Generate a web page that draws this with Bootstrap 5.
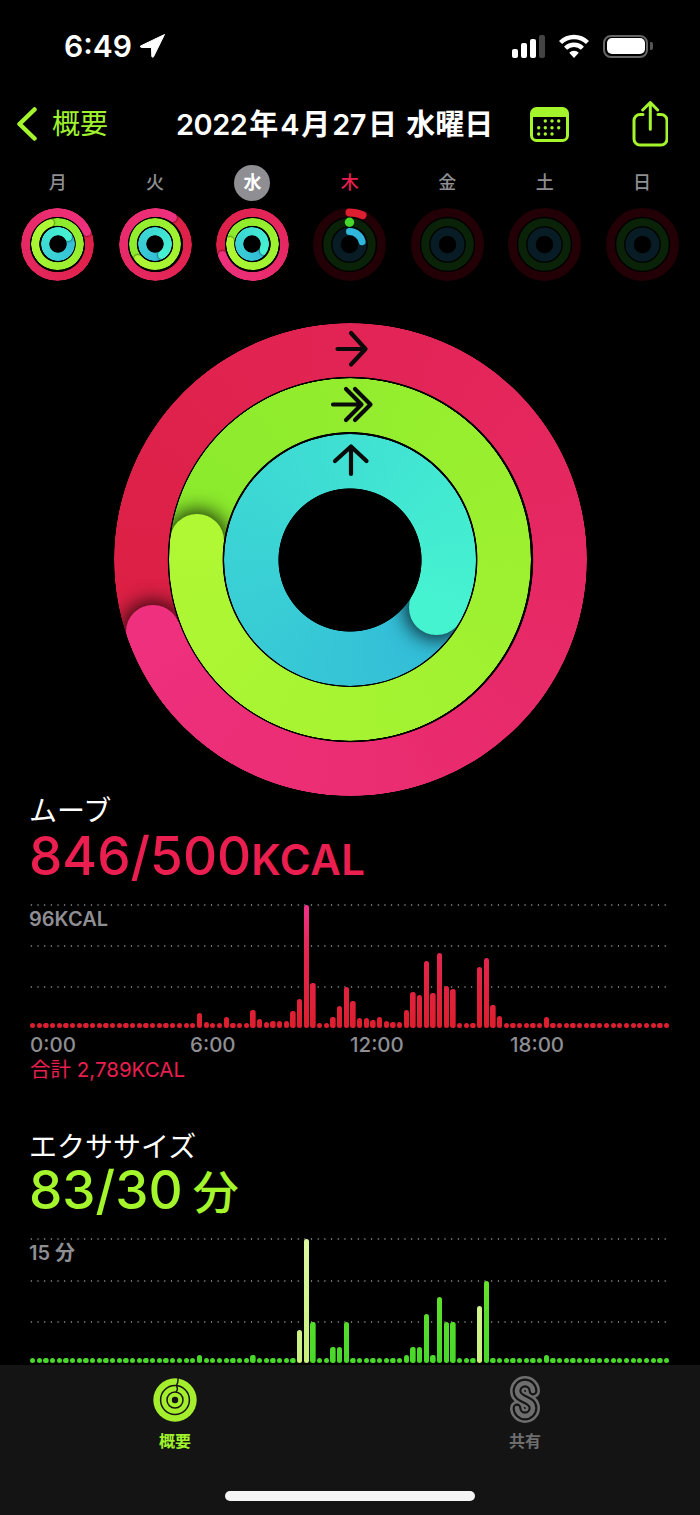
<!DOCTYPE html>
<html lang="ja">

<head>
    <meta charset="UTF-8">
    <title>アクティビティ</title>
    <link rel="stylesheet" href="https://cdn.jsdelivr.net/npm/bootstrap@5.3.0/dist/css/bootstrap.min.css">
    <style>
        html, body { background: #000; margin: 0; }
        body { font-family: Inter, "Noto Sans CJK JP", sans-serif; color: #fff; }
        #phone { width: 700px; height: 1515px; }
        .scroll-pane { min-height: 0; }

        /* status bar */
        .status-row { height: 92px; padding: 0 47px 0 64px; }
        .status-time { font-size: 30px; font-weight: 600; line-height: 1; }
        .signal-group { display: flex; align-items: flex-end; gap: 3px; height: 23px; margin-right: 14px; }
        .signal-bar { width: 6px; background: #fff; border-radius: 2px; }
        .signal-off { background: #444; }
        .wifi-icon { margin-right: 14px; }
        .batt-box { width: 45px; height: 23px; border: 2px solid #666; border-radius: 8px; padding: 1.5px; }
        .batt-fill { background: #fff; border-radius: 5px; height: 100%; }
        .batt-nub { width: 3px; height: 8px; background: #555; border-radius: 0 2px 2px 0; margin-left: 2px; }

        /* nav */
        .nav-row { height: 64px; padding-left: 17px; }
        .nav-back { width: 159px; color: #a0f22c; font-size: 28px; }
        .nav-back span { margin-left: 15px; line-height: 1; }
        .nav-title { width: 354px; font-size: 29px; font-weight: 600; line-height: 1; white-space: nowrap; }
        .nav-title i { font-style: normal; letter-spacing: -0.5px; }
        .nav-title b { font-weight: 600; margin: 0 2px; }
        .nav-cal { width: 102px; }

        /* week */
        .week-grid { display: grid; grid-template-columns: repeat(7, 97.4px); padding-left: 9px; }
        .day-cell { display: flex; flex-direction: column; align-items: center; }
        .day-name { width: 36px; height: 36px; margin-top: 9px; border-radius: 50%; font-size: 18px; font-weight: 500; line-height: 36px; text-align: center; color: #8e8e93; }
        .day-today { background: #8e8e93; color: #fff; font-weight: 700; }
        .day-thu { color: #ea1f4f; }
        .day-ring { margin-top: 6.7px; height: 73px; }

        /* rings */
        .ring-stack { position: relative; }
        .ring-layer { position: absolute; border-radius: 50%; overflow: hidden; }
        .ring-fill { position: absolute; inset: 0; }
        .ring-cap { position: absolute; border-radius: 50%; }
        .main-ring { width: 473px; height: 473px; margin: 42.5px auto 0; }
        .ring-arrows { position: absolute; inset: 0; }

        /* charts */
        .sect-label { padding-left: 29px; font-size: 28px; line-height: 34px; }
        .sect-big { padding-left: 29px; font-size: 53px; font-weight: 500; line-height: 50px; margin-top: 3px; white-space: nowrap; }
        .sect-big small { font-size: 42px; font-weight: 600; letter-spacing: .5px; }
        .sect-big span { font-size: 46px; font-weight: 500; margin-left: 10px; }
        .tone-red { color: #ea1f4f; }
        .tone-green { color: #a4f52c; margin-top: 1px; }
        .chart-box { position: relative; margin: 20px 30px 0 28px; }
        #chart-exercise { margin-top: 22px; }
        .grid-line { position: absolute; left: 0; right: 0; height: 2px; background: radial-gradient(circle, #777 .8px, transparent 1.1px) 0 0 / 6.68px 2px repeat-x; }
        .chart-max { position: absolute; left: 1px; top: 2px; font-size: 20px; font-weight: 600; line-height: 24px; color: #8e8e93; }
        .bars { position: absolute; left: 2.05px; right: 0; bottom: 0; display: flex; align-items: flex-end; gap: 1.377px; }
        .bar { width: 5.3px; flex: none; border-radius: 2.65px; background-position: bottom; background-size: 100% 124px; }
        .bars-red .bar { background-image: linear-gradient(to top, #dd1e2e, #e5264e 60%, #f0328a); }
        .bars-green .bar { background-image: linear-gradient(to top, #47d82a, #62e02c 60%, #96f034); }
        .bars-green .bar.bar-lit { background-image: linear-gradient(to top, #c8f07a, #dcf8a0); }
        .axis-row { display: grid; grid-template-columns: repeat(4, 160px); padding-left: 30px; margin-top: 5px; font-size: 20.5px; font-weight: 500; line-height: 24px; color: #8e8e93; }
        .chart-total { padding-left: 30px; font-size: 20.5px; line-height: 26px; color: #ea1f4f; }

        /* tab bar */
        .tab-bar { height: 150px; flex: none; padding-top: 11px; background: #141414; }
        .tab-icon { height: 47px; }
        .tab-text { font-size: 16px; font-weight: 700; line-height: 20px; margin-top: 8px; }
        .tab-on { color: #a0f22c; }
        .tab-off { color: #6e6e6e; }
        .home-bar { width: 250px; height: 10px; margin-top: 40px; background: #f5f5f5; }
    </style>
</head>

<body>
    <div id="phone" class="d-flex flex-column overflow-hidden">
        <div class="scroll-pane flex-grow-1 overflow-hidden">

            <!-- status bar -->
            <div class="status-row d-flex align-items-center justify-content-between">
                <div class="d-flex align-items-center">
                    <span class="status-time">6:49</span>
                    <svg class="ms-2" width="25" height="24" viewBox="0 0 25 24"><path d="M24.5 0.5 L0.5 12 Q0 13.2 1.5 13.5 L11.5 13.5 L11.8 22.5 Q12.5 24 13.5 22.8 Z" fill="#fff" stroke="#fff" stroke-linejoin="round"/></svg>
                </div>
                <div class="d-flex align-items-center">
                    <div class="signal-group">
                        <div class="signal-bar" style="height:9px"></div>
                        <div class="signal-bar" style="height:15px"></div>
                        <div class="signal-bar" style="height:19px"></div>
                        <div class="signal-bar signal-off" style="height:23px"></div>
                    </div>
                    <svg class="wifi-icon" width="30" height="24" viewBox="0 0 30 24" fill="none" stroke="#fff" stroke-width="4.4">
                        <path d="M1.5 8.5 A19.5 19.5 0 0 1 28.5 8.5"/>
                        <path d="M6.6 14.2 A12 12 0 0 1 23.4 14.2"/>
                        <path d="M15 24 L10.2 18.8 A6.8 6.8 0 0 1 19.8 18.8 Z" fill="#fff" stroke="none"/>
                    </svg>
                    <div class="batt-box"><div class="batt-fill"></div></div>
                    <div class="batt-nub"></div>
                </div>
            </div>

            <!-- nav -->
            <div class="nav-row d-flex align-items-center">
                <div class="nav-back d-flex align-items-center">
                    <svg width="20" height="34" viewBox="0 0 20 34" fill="none" stroke="#a4f52c" stroke-width="4.5" stroke-linecap="round" stroke-linejoin="round"><path d="M17.5 2.5 L2.5 17 L17.5 31.5"/></svg>
                    <span>概要</span>
                </div>
                <div class="nav-title"><i>2022</i><b>年</b><i>4</i><b>月</b><i>27</i><b>日</b> 水曜日</div>
                <div class="nav-cal d-flex">
                    <svg width="39" height="35" viewBox="0 0 39 35">
                        <rect x="1.5" y="1.5" width="36" height="32" rx="5" fill="none" stroke="#a4f52c" stroke-width="3"/>
                        <path d="M1.5 10 V6 a5 5 0 0 1 5 -5 H32.5 a5 5 0 0 1 5 5 V10 Z" fill="#a4f52c"/>
                        <g id="cal-dots" fill="#a4f52c"></g>
                    </svg>
                </div>
                <svg width="36" height="46" viewBox="0 0 36 46" fill="none" stroke="#a4f52c" stroke-width="3" stroke-linecap="round" stroke-linejoin="round">
                    <path d="M11 13.5 H8 a6 6 0 0 0 -6 6 V38 a6 6 0 0 0 6 6 H29 a6 6 0 0 0 6 -6 V19.5 a6 6 0 0 0 -6 -6 H26"/>
                    <path d="M18.3 28.3 V2 M10.7 9 L18.3 1.5 L25.7 9"/>
                </svg>
            </div>

            <!-- week -->
            <div id="week" class="week-grid"></div>

            <!-- main ring -->
            <div id="main-ring" class="ring-stack main-ring"></div>

            <!-- move -->
            <div class="sect-label" style="margin-top:-2px">ムーブ</div>
            <div class="sect-big tone-red">846/500<small>KCAL</small></div>
            <div id="chart-move" class="chart-box"></div>
            <div class="axis-row"><span>0:00</span><span>6:00</span><span>12:00</span><span>18:00</span></div>
            <div class="chart-total">合計 2,789KCAL</div>

            <!-- exercise -->
            <div class="sect-label" style="margin-top:47px">エクササイズ</div>
            <div class="sect-big tone-green">83/30<span>分</span></div>
            <div id="chart-exercise" class="chart-box"></div>
        </div>

        <!-- tab bar -->
        <div class="tab-bar">
            <div class="row g-0 text-center">
                <div class="col-6">
                    <div class="tab-icon d-flex align-items-center justify-content-center">
                        <svg width="44" height="44" viewBox="-22 -22 44 44">
                            <circle r="21.7" fill="#a4ee2e"/>
                            <circle r="14.4" fill="none" stroke="#141414" stroke-width="1.5"/>
                            <circle r="8" fill="none" stroke="#141414" stroke-width="1.5"/>
                            <circle r="3.2" fill="#141414"/>
                            <path d="M3 -22 Q3.4 -18 1.5 -14.5 M1.5 -14 Q3.5 -11 1 -8" fill="none" stroke="#141414" stroke-width="1.4"/>
                        </svg>
                    </div>
                    <div class="tab-text tab-on">概要</div>
                </div>
                <div class="col-6">
                    <div class="tab-icon d-flex align-items-center justify-content-center">
                        <svg width="30" height="47" viewBox="0 0 30 47" fill="none" stroke-linecap="round">
                            <path d="M23 15 A8 8 0 1 0 7 15 C7 20 11 21.5 15 23.5 C19 25.5 23 27 23 32 A8 8 0 1 1 7 32" stroke="#6e6e6e" stroke-width="14"/>
                            <path d="M23 15 A8 8 0 1 0 7 15 C7 20 11 21.5 15 23.5 C19 25.5 23 27 23 32 A8 8 0 1 1 7 32" stroke="#141414" stroke-width="8.8"/>
                            <path d="M23 15 A8 8 0 1 0 7 15 C7 20 11 21.5 15 23.5 C19 25.5 23 27 23 32 A8 8 0 1 1 7 32" stroke="#6e6e6e" stroke-width="4.6"/>
                        </svg>
                    </div>
                    <div class="tab-text tab-off">共有</div>
                </div>
            </div>
            <div class="home-bar rounded-pill mx-auto"></div>
        </div>
    </div>

    <script src="https://cdn.jsdelivr.net/npm/bootstrap@5.3.0/dist/js/bootstrap.bundle.min.js"></script>
    <script>
        const RED = ['#dc1f42', '#ee307e'];
        const GREEN = ['#8aea2c', '#b0f734'];
        const TEAL = ['#32bad8', '#46f3d0'];

        function mix(a, b, t) {
            const pa = [1, 3, 5].map(i => parseInt(a.substr(i, 2), 16));
            const pb = [1, 3, 5].map(i => parseInt(b.substr(i, 2), 16));
            return 'rgb(' + pa.map((v, i) => Math.round(v + (pb[i] - v) * t)).join(',') + ')';
        }

        // one ring: full lap with a capped end that throws a shadow
        function ringLayer(R, inner, outer, end, cols, blur) {
            const mid = (inner + outer) / 2;
            const w = outer - inner;
            const rad = end * Math.PI / 180;
            const cx = outer + mid * Math.sin(rad) - w / 2;
            const cy = outer - mid * Math.cos(rad) - w / 2;
            const mask = `radial-gradient(circle closest-side, transparent ${inner - .4}px, #000 ${inner + .3}px, #000 ${outer - .3}px, transparent ${outer + .2}px)`;
            return `<div class="ring-layer" style="left:${R - outer}px;top:${R - outer}px;width:${outer * 2}px;height:${outer * 2}px;-webkit-mask-image:${mask};mask-image:${mask}">
                <div class="ring-fill" style="background:conic-gradient(from ${end}deg, ${cols[0]}, ${cols[1]})"></div>
                <div class="ring-cap" style="left:${cx}px;top:${cy}px;width:${w}px;height:${w}px;background:${cols[1]};box-shadow:0 0 ${blur}px ${blur / 6}px rgba(0,0,0,.85)"></div>
                <div class="ring-fill" style="background:conic-gradient(from ${end}deg, transparent 0 75%, ${mix(cols[0], cols[1], .75)} 75%, ${cols[1]} 100%)"></div>
            </div>`;
        }

        function smallRings(ends) {
            return `<div class="ring-stack" style="width:73px;height:73px">`
                + ringLayer(36.5, 27.7, 36.5, ends[0], RED, 2)
                + ringLayer(36.5, 18.3, 26.3, ends[1], GREEN, 2)
                + ringLayer(36.5, 8.7, 17, ends[2], TEAL, 2)
                + `</div>`;
        }

        function arc(r, a0, a1) {
            const p = a => [36.5 + r * Math.sin(a * Math.PI / 180), 36.5 - r * Math.cos(a * Math.PI / 180)];
            const s = p(a0), e = p(a1);
            return `M${s[0]} ${s[1]} A${r} ${r} 0 0 1 ${e[0]} ${e[1]}`;
        }

        function dimRings(active) {
            let extra = '';
            if (active) {
                extra = `<path d="${arc(32.1, 0, 24)}" fill="none" stroke="#dc1e30" stroke-width="8" stroke-linecap="round"/>
                    <circle cx="36.5" cy="14.2" r="4.7" fill="#45d72a"/>
                    <path d="${arc(12.9, 0, 78)}" fill="none" stroke="#30b8dc" stroke-width="7" stroke-linecap="round"/>`;
            }
            return `<svg width="73" height="73" viewBox="0 0 73 73" fill="none">
                <circle cx="36.5" cy="36.5" r="32.1" stroke="#220006" stroke-width="8.8"/>
                <circle cx="36.5" cy="36.5" r="22.3" stroke="#0a2207" stroke-width="8"/>
                <circle cx="36.5" cy="36.5" r="12.9" stroke="#071c24" stroke-width="8.3"/>
                ${extra}
            </svg>`;
        }

        // week strip
        const days = [
            { name: '月', ends: [66, 340, 55] },
            { name: '火', ends: [33, 230, 146] },
            { name: '水', ends: [250, 277, 119], cls: 'day-today' },
            { name: '木', active: true, cls: 'day-thu' },
            { name: '金' },
            { name: '土' },
            { name: '日' }
        ];
        document.getElementById('week').innerHTML = days.map(d => `
            <div class="day-cell">
                <div class="day-name ${d.cls || ''}">${d.name}</div>
                <div class="day-ring">${d.ends ? smallRings(d.ends) : dimRings(d.active)}</div>
            </div>`).join('');

        // main ring
        document.getElementById('main-ring').innerHTML =
            ringLayer(236.5, 182.8, 236.5, 250, RED, 20)
            + ringLayer(236.5, 127.5, 181.2, 277, GREEN, 20)
            + ringLayer(236.5, 71.7, 126, 119, TEAL, 20)
            + `<svg class="ring-arrows" viewBox="0 0 473 473" fill="none" stroke="#0a0a0a" stroke-width="4.2" stroke-linecap="round" stroke-linejoin="round">
                <path d="M223.5 26 H250 M237 10 L251.5 26 L237 41.5"/>
                <path d="M219 81.5 H245 M232 66 L247.5 81.5 L232 97 M241 66 L256.5 81.5 L241 97"/>
                <path d="M237 151 V125 M221 138 L237 123.5 L252.5 138"/>
            </svg>`;

        // calendar dots
        const calDots = [[15.3, 14], [22, 14], [28.7, 14], [8.7, 20.7], [15.3, 20.7], [22, 20.7], [28.7, 20.7], [8.7, 27], [15.3, 27], [22, 27]];
        document.getElementById('cal-dots').innerHTML = calDots.map(d => `<circle cx="${d[0]}" cy="${d[1]}" r="1.7"/>`).join('');

        // charts: 96 quarter hour bars, anything missing is the baseline dot
        const moveBars = {
            25: 15.7, 26: 6.7, 29: 11, 33: 18.3, 34: 9, 35: 6.7, 36: 7.3, 37: 7.3, 38: 7, 39: 17, 40: 29, 41: 123.3, 42: 45.3,
            44: 5.7, 45: 11.3, 46: 22, 47: 41, 48: 27, 49: 10.3, 50: 10.3, 51: 8.3, 52: 11, 53: 7, 54: 6, 55: 6.7, 56: 18, 57: 36,
            58: 33, 59: 67, 60: 35.3, 61: 75, 62: 42, 63: 39, 67: 61.7, 68: 70, 69: 23, 70: 12, 77: 11.7
        };
        const exerciseBars = {
            25: 8.3, 33: 8.3, 40: 33.3, 41: 124, 42: 41.3, 45: 16.3, 46: 16.3, 47: 41.3, 56: 8.3, 57: 16.3, 58: 16.3, 59: 49.3,
            60: 8.3, 61: 66, 62: 41.3, 63: 41.3, 67: 57.7, 68: 82.7, 77: 8.3
        };

        function renderChart(id, height, tone, label, data, lit) {
            let bars = '';
            for (let i = 0; i < 96; i++) {
                bars += `<div class="bar ${lit.includes(i) ? 'bar-lit' : ''}" style="height:${data[i] || 5.3}px"></div>`;
            }
            const step = height / 3;
            let lines = '';
            for (let i = 0; i < 3; i++) {
                lines += `<div class="grid-line" style="top:${i * step - 1}px"></div>`;
            }
            const box = document.getElementById(id);
            box.style.height = height + 'px';
            box.innerHTML = `${lines}<div class="chart-max">${label}</div><div class="bars ${tone}">${bars}</div>`;
        }
        renderChart('chart-move', 123.3, 'bars-red', '96KCAL', moveBars, []);
        renderChart('chart-exercise', 124, 'bars-green', '15 分', exerciseBars, [40, 41, 67]);
    </script>
</body>

</html>
